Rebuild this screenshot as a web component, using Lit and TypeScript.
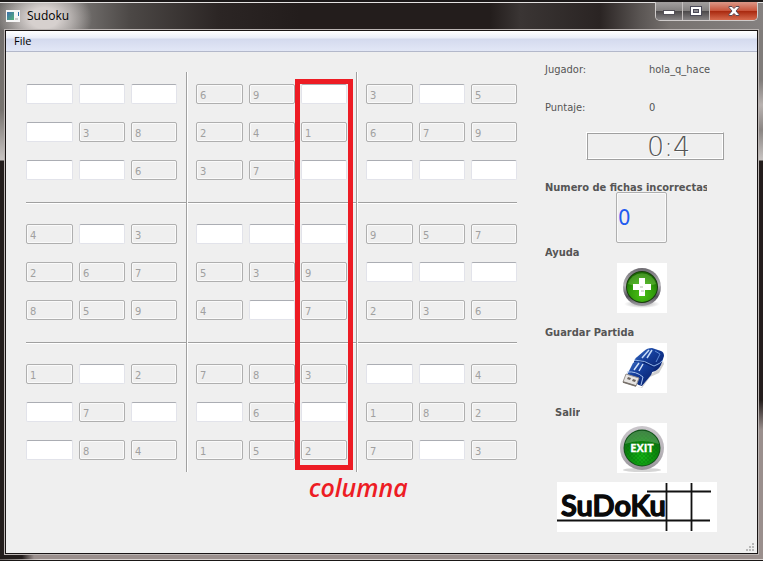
import { LitElement, html, svg, css } from "lit";
import { customElement, property } from "lit/decorators.js";

const PUZZLE = [
  "...69.3.5",
  ".38241679",
  "..637....",
  "4.3...957",
  "267539...",
  "8594.7236",
  "1.2783..4",
  ".7..6.182",
  ".841527.3",
];

@customElement("sudoku-board")
export class SudokuBoard extends LitElement {
  static styles = css`
    :host {
      display: block;
    }
    .board {
      display: grid;
      grid-template-columns: 1fr 3px 1fr 3px 1fr;
      grid-template-rows: auto 4px auto 4px auto;
      gap: 20px 8px;
    }
    .block {
      display: grid;
      grid-template-columns: 47fr 46fr 46fr;
      gap: 18px 6px;
    }
    .cell {
      box-sizing: border-box;
      width: 100%;
      min-width: 0;
      height: 20px;
      margin: 0;
      padding: 2px 3px 0;
      border: 1px solid #e2e3ea;
      border-top-color: #abadb3;
      border-radius: 2px;
      background: #fff;
      color: #000;
      font: 11px/16px "DejaVu Sans Condensed", "DejaVu Sans", sans-serif;
    }
    .cell:disabled {
      border-color: #afafaf;
      background: #efefef;
      box-shadow: inset 0 0 0 1px #fafafa;
      color: #a0a0a0;
    }
    .rule-h {
      grid-column: 1 / -1;
      align-self: end;
      height: 1px;
      background: #a0a0a0;
      border-bottom: 1px solid #fff;
    }
    .rule-v {
      grid-row: 1 / -1;
      justify-self: end;
      width: 1px;
      margin: -12px 0;
      background: #a0a0a0;
      border-right: 1px solid #fff;
    }
    .mark {
      grid-column: 3;
      grid-row: 1 / -1;
      justify-self: end;
      position: relative;
      box-sizing: border-box;
      width: calc((100% - 12px) / 3 + 12px);
      margin: -5px -6px -10px 0;
      border: 5px solid #ed1c24;
      pointer-events: none;
    }
    .caption {
      position: absolute;
      top: 100%;
      left: 9px;
      padding-top: 6px;
      color: #ed1c24;
      font: italic 600 25px/32px "Open Sans", sans-serif;
    }
  `;

  private block(br: number, bc: number) {
    const cells = [];
    for (let r = br * 3; r < br * 3 + 3; r++) {
      for (let c = bc * 3; c < bc * 3 + 3; c++) {
        const v = PUZZLE[r][c];
        const given = v !== ".";
        cells.push(html`<input
          class="cell"
          type="text"
          maxlength="1"
          aria-label="Fila ${r + 1}, columna ${c + 1}"
          .value=${given ? v : ""}
          ?disabled=${given}
        />`);
      }
    }
    return html`<div class="block" style="grid-row:${br * 2 + 1};grid-column:${bc * 2 + 1}">${cells}</div>`;
  }

  render() {
    return html`<div class="board">
      ${[0, 1, 2].map((r) => [0, 1, 2].map((c) => this.block(r, c)))}
      ${[2, 4].map((n) => html`<div class="rule-h" style="grid-row:${n}"></div>`)}
      ${[2, 4].map((n) => html`<div class="rule-v" style="grid-column:${n}"></div>`)}
      <div class="mark"><span class="caption">columna</span></div>
    </div>`;
  }
}

const plusIcon = svg`<svg viewBox="0 0 50 50" width="50" height="50" aria-hidden="true">
  <defs>
    <linearGradient id="rim" x1="0" y1="0" x2="0" y2="1">
      <stop offset="0" stop-color="#6d6a70"/><stop offset=".45" stop-color="#b5b3b8"/>
      <stop offset=".75" stop-color="#55535a"/><stop offset="1" stop-color="#a5a3a8"/>
    </linearGradient>
    <radialGradient id="green" cx=".5" cy=".75" r=".7">
      <stop offset="0" stop-color="#4cc016"/><stop offset=".6" stop-color="#2f9a0a"/><stop offset="1" stop-color="#1b6a04"/>
    </radialGradient>
    <radialGradient id="sh"><stop offset="0" stop-color="#aaa"/><stop offset="1" stop-color="#fff"/></radialGradient>
  </defs>
  <ellipse cx="25" cy="41" rx="18" ry="4" fill="url(#sh)"/>
  <circle cx="25" cy="24" r="19" fill="url(#rim)"/>
  <circle cx="25" cy="24" r="16" fill="#173d0c"/>
  <circle cx="25" cy="24" r="15" fill="url(#green)"/>
  <path d="M11 21a14.500 14.500 0 0 1 28 0q-14 5-28 0z" fill="#8fdc60" opacity=".35"/>
  <path d="M22 15h6v6h6v6h-6v6h-6v-6h-6v-6h6z" fill="#fff"/>
  <path d="M23 24h3M24 28h3" stroke="#d8dcd6" stroke-width="2"/>
</svg>`;

const usbIcon = svg`<svg viewBox="0 0 50 50" width="50" height="50" aria-hidden="true">
  <defs>
    <linearGradient id="blue" x1="0" y1="0" x2="1" y2="1">
      <stop offset="0" stop-color="#3f70c4"/><stop offset=".4" stop-color="#153f9c"/><stop offset="1" stop-color="#061c66"/>
    </linearGradient>
  </defs>
  <path d="M14 42l10 3 10-14 8-5 4-8 1 3-5 9-9 4-8 11z" fill="#bbb" opacity=".7"/>
  <path d="M27 8q3-3 8-3l9 3q3 1 3 5l-3 9q-3 6-9 7L18 19q-1-3 2-5z" fill="url(#blue)"/>
  <path d="M17 18q9-2 20 4l-1 5q-9-5-18-5z" fill="#0a2674"/>
  <path d="M17 17q11 0 20 6 6-2 9-6" fill="none" stroke="#90b4ea"/>
  <path d="M25 15l7-8M30 15l5-8" stroke="#c4daf8" stroke-width="1.500"/>
  <path d="M38 8l5 3-4 8" fill="none" stroke="#5d8ad6"/>
  <path d="M16 20q3-3 8-1l13 6-3 7-9 11q-5 0-15-11z" fill="url(#blue)"/>
  <path d="M17 27l5-7M22 28l4-7" stroke="#d4e4fa" stroke-width="1.500"/>
  <path d="M10 29q9-1 16 5l-2 8" fill="none" stroke="#a9c3ee"/>
  <path d="M9 31l13 4-3 8-13-4z" fill="#e6e4e2" stroke="#99938f"/>
  <path d="M11 34l3 1-1 2-3-1zM16 36l3 1-1 2-3-1z" fill="#6b625c"/>
  <path d="M6 39l13 4" stroke="#77706a" stroke-width="1.500"/>
</svg>`;

const exitIcon = svg`<svg viewBox="0 0 50 50" width="50" height="50" aria-hidden="true">
  <defs>
    <linearGradient id="ring" x1="0" y1="0" x2="0" y2="1">
      <stop offset="0" stop-color="#cac6cb"/><stop offset=".6" stop-color="#b8b4b9"/><stop offset="1" stop-color="#959197"/>
    </linearGradient>
    <radialGradient id="disc" cx=".5" cy=".75" r=".75">
      <stop offset="0" stop-color="#13b516"/><stop offset=".6" stop-color="#0a840c"/><stop offset="1" stop-color="#12601a"/>
    </radialGradient>
    <pattern id="dots" width="4" height="4" patternUnits="userSpaceOnUse"><path d="M1 0v2M3 2v2" stroke="#065c0a"/></pattern>
  </defs>
  <ellipse cx="25" cy="47" rx="19" ry="2" fill="#d5d5d5"/>
  <circle cx="25" cy="25" r="22" fill="url(#ring)"/>
  <circle cx="25" cy="25" r="18.500" fill="#12501a"/>
  <circle cx="25" cy="25" r="17.500" fill="url(#disc)"/>
  <circle cx="25" cy="25" r="16" fill="url(#dots)" opacity=".5"/>
  <path d="M8 21a17.500 17.500 0 0 1 34 0q-17-6-34 0z" fill="#b0dcb0" opacity=".3"/>
  <text x="25" y="29" text-anchor="middle" fill="#fff" stroke="#fff" stroke-width=".3" font-family="Open Sans, sans-serif" font-weight="bold" font-size="11">EXIT</text>
</svg>`;

const logo = svg`<svg class="logo" viewBox="0 0 160 50" width="160" height="50" role="img" aria-label="SuDoKu">
  <rect width="160" height="50" fill="#fff"/>
  <text x="4" y="34" font-family="Lato, sans-serif" font-weight="600" font-size="29" fill="#0a0a0a" stroke="#0a0a0a" stroke-width="1.500" stroke-linejoin="round">SuDoKu</text>
  <path d="M0 38.500h153M90 9.500h64M109.500 1v48M134.500 1v48" fill="none" stroke="#111" stroke-width="1.800"/>
</svg>`;

@customElement("side-panel")
export class SidePanel extends LitElement {
  @property() player = "hola_q_hace";
  @property() score = "0";
  @property() wrong = "0";

  static styles = css`
    :host {
      display: flex;
      flex-direction: column;
      align-items: flex-start;
      color: #555;
      font: 11px/20px "DejaVu Sans Condensed", "DejaVu Sans", sans-serif;
    }
    .stats {
      display: grid;
      grid-template-columns: 104px auto;
      row-gap: 18px;
      margin: 0;
    }
    dt,
    dd {
      margin: 0;
    }
    .lcd {
      box-sizing: border-box;
      display: flex;
      justify-content: flex-end;
      width: 138px;
      height: 28px;
      margin: 14px 0 20px 41px;
      padding-right: 35px;
      border: 1px solid #fff;
      border-right-color: #a0a0a0;
      border-bottom-color: #a0a0a0;
      box-shadow: inset 1px 1px #a0a0a0, inset -1px -1px #fff;
      color: #555;
      font: 200 27px/28px "DejaVu Sans", "DejaVu Sans Condensed", sans-serif;
    }
    .digit {
      display: flex;
      justify-content: center;
      width: 13px;
      text-shadow: 1px 1px #fff;
    }
    .heading {
      max-width: 162px;
      overflow: hidden;
      white-space: nowrap;
      font-weight: bold;
      line-height: 16px;
    }
    .inset {
      padding-left: 10px;
    }
    .wrong {
      box-sizing: border-box;
      width: 51px;
      height: 51px;
      margin: -4px 0 2px 71px;
      padding: 0 1px;
      border: 1px solid #afafaf;
      border-radius: 2px;
      background: none;
      box-shadow: inset 0 0 0 1px #fafafa;
      color: #1f5cf0;
      font: 22px/26px "DejaVu Sans Condensed", "DejaVu Sans", sans-serif;
    }
    .action {
      display: block;
      width: 50px;
      height: 50px;
      margin: 2px 0 12px 72px;
      padding: 0;
      border: 0;
      background: #fff;
    }
    svg {
      display: block;
    }
    .logo {
      margin: -3px 0 0 12px;
    }
  `;

  render() {
    return html`
      <dl class="stats">
        <dt>Jugador:</dt>
        <dd>${this.player}</dd>
        <dt>Puntaje:</dt>
        <dd>${this.score}</dd>
      </dl>
      <output class="lcd" aria-label="Tiempo">${[..."0:4"].map((d) => html`<span class="digit">${d}</span>`)}</output>
      <label class="heading" for="wrong">Numero de fichas incorrectas</label>
      <input class="wrong" id="wrong" type="text" readonly .value=${this.wrong} />
      <label class="heading" for="help">Ayuda</label>
      <button class="action" id="help">${plusIcon}</button>
      <label class="heading" for="save">Guardar Partida</label>
      <button class="action" id="save">${usbIcon}</button>
      <label class="heading inset" for="exit">Salir</label>
      <button class="action" id="exit">${exitIcon}</button>
      ${logo}
    `;
  }
}

@customElement("app-root")
export class AppRoot extends LitElement {
  static styles = css`
    :host {
      display: block;
    }
    .window {
      box-sizing: border-box;
      display: flex;
      flex-direction: column;
      min-height: 100vh;
      padding: 0 5px 7px;
      background:
        linear-gradient(#1c1919, #1c1919) top / 100% 2px no-repeat,
        linear-gradient(#e4e2e1, #e4e2e1) 0 2px / 100% 1px no-repeat,
        linear-gradient(#1a1716, #1a1716) bottom / 100% 1px no-repeat,
        linear-gradient(90deg, #6a6462, #d8d2d0 40px) 0 calc(100% - 1px) / 100% 1px no-repeat,
        linear-gradient(90deg, #231d1c 22px, #9a8f8d 34px) bottom / 100% 7px no-repeat,
        radial-gradient(ellipse 48px 34px at 44px 18px, #d6d0ce 30%, transparent) 0 0 / 100% 30px no-repeat,
        linear-gradient(90deg, #6f6c6a, #7d7a78 70px, #4c4846 130px, #2b2524 220px, #231d1c 300px, #231d1c 490px, #3a3534 520px, #2a2423 600px, #5a5553 640px, #77726f 670px, #858180) top / 100% 30px no-repeat,
        linear-gradient(#706d6b, #77736f 110px, #c8c4c2 160px, #231d1c 161px) left / 6px 100% no-repeat,
        linear-gradient(#807c7a 80px, #b8b2b0 105px, #8a8583 130px, #c8c4c2 160px, #231d1c 161px, #231d1c 400px, #9a8f8d 430px) right / 6px 100% no-repeat,
        #231d1c;
    }
    .titlebar {
      display: flex;
      align-items: flex-start;
      height: 30px;
    }
    .app-icon {
      margin: 10px 7px 0 1px;
    }
    .title {
      flex: 1;
      margin: 0;
      padding-top: 6px;
      color: #000;
      font: 12px/20px "Open Sans", sans-serif;
    }
    .controls {
      display: flex;
      height: 18px;
      margin-top: 2px;
      border: 1px solid #d0cccb;
      border-top: 0;
      border-radius: 0 0 5px 5px;
      overflow: hidden;
    }
    .control {
      display: grid;
      place-items: center;
      width: 27px;
      padding: 0;
      border: 0;
      border-right: 1px solid #c4c0bf;
      background: linear-gradient(#a3a09f, #83807f 48%, #4d4a4b 52%, #858283);
    }
    .close {
      width: 47px;
      border-right: 0;
      background: linear-gradient(#dc9888, #c8553c 48%, #a92a10 52%, #d66b4e);
    }
    .client {
      flex: 1;
      display: flex;
      flex-direction: column;
      position: relative;
      border: 1px solid #181414;
      box-shadow: 0 0 0 1px #bbb5b3;
      background: #efefef;
    }
    .menubar {
      height: 20px;
      border-bottom: 1px solid #b3b8ca;
      background: linear-gradient(#fff, #eaeef8 7px, #d4daee 8px, #e2e7f6);
    }
    .menu {
      height: 20px;
      padding: 0 8px;
      border: 0;
      background: none;
      color: #000;
      font: 11px/20px "Open Sans", sans-serif;
    }
    .content {
      display: flex;
      gap: 28px;
      padding-left: 20px;
    }
    .grid {
      flex: 1;
      padding-top: 32px;
    }
    .side {
      flex: 0 0 212px;
      padding-top: 8px;
    }
    .grip {
      position: absolute;
      right: 2px;
      bottom: 1px;
    }
  `;

  render() {
    return html`<div class="window">
      <header class="titlebar">
        <svg class="app-icon" width="14" height="12" viewBox="0 0 14 12" aria-hidden="true">
          <defs>
            <linearGradient id="pic" x1="0" y1="0" x2="1" y2="1">
              <stop offset="0" stop-color="#3d6fae" /><stop offset="1" stop-color="#53b078" />
            </linearGradient>
          </defs>
          <rect width="14" height="12" fill="#f6f6f6" />
          <rect x="1" y="2" width="7" height="8" fill="url(#pic)" />
          <rect x="12" y="2" width="1" height="4" fill="#2b6fa8" />
          <rect x="9" y="8" width="3" height="2" fill="#ccc" />
        </svg>
        <h1 class="title">Sudoku</h1>
        <div class="controls">
          <button class="control" aria-label="Minimizar">
            <svg width="12" height="10" viewBox="0 0 12 10"><rect x=".5" y="4.500" width="11" height="4" fill="#fff" stroke="#55525a" /></svg>
          </button>
          <button class="control" aria-label="Maximizar">
            <svg width="12" height="10" viewBox="0 0 12 10">
              <rect x=".5" y=".5" width="11" height="9" fill="#fff" stroke="#4b4a58" />
              <rect x="3.500" y="3.500" width="5" height="3" fill="#8c8a90" stroke="#4b4a58" />
            </svg>
          </button>
          <button class="control close" aria-label="Cerrar">
            <svg width="12" height="10" viewBox="0 0 12 10">
              <path d="M1 .5h3l2 2 2-2h3v1L8 5l3 3.500v1H8l-2-2-2 2H1v-1L4 5 1 1.500z" fill="#fff" stroke="#5a4a55" />
            </svg>
          </button>
        </div>
      </header>
      <main class="client">
        <nav class="menubar"><button class="menu">File</button></nav>
        <div class="content">
          <sudoku-board class="grid"></sudoku-board>
          <side-panel class="side"></side-panel>
        </div>
        <svg class="grip" width="9" height="9" viewBox="0 0 9 9" aria-hidden="true">
          <path d="M6 1h2M3 4h2M6 4h2M0 7h2M3 7h2M6 7h2" stroke="#b8b8b8" stroke-width="2" />
        </svg>
      </main>
    </div>`;
  }
}
